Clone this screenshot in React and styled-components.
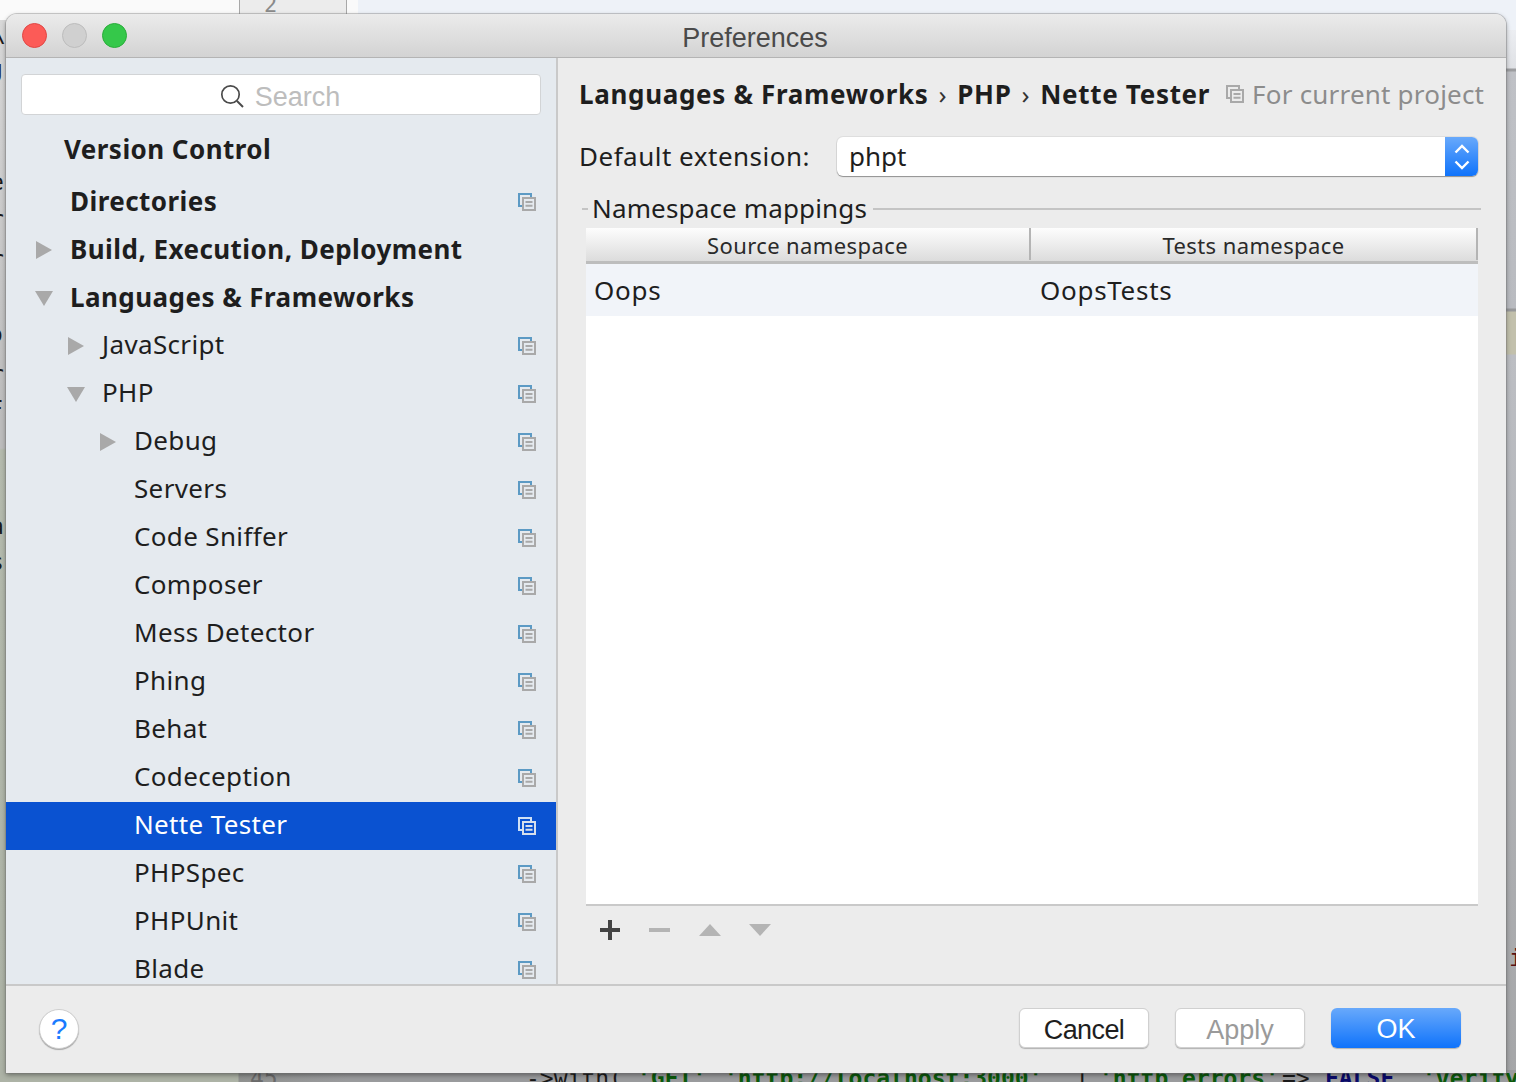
import React from 'react';
import styled, { createGlobalStyle } from 'styled-components';

const GlobalStyle = createGlobalStyle`
  html, body {
    margin: 0;
    padding: 0;
    width: 1516px;
    height: 1082px;
    overflow: hidden;
    background: #f7f8fa;
  }
  * { box-sizing: border-box; }
`;

const UI_FONT = `"Noto Sans", "Open Sans", sans-serif`;
const MAC_FONT = `"Liberation Sans", Arial, sans-serif`;
const CODE_FONT = `"DejaVu Sans Mono", "Liberation Mono", monospace`;

const Desktop = styled.div`
  position: relative;
  width: 1516px;
  height: 1082px;
  overflow: hidden;
`;

const TopStrip = styled.div`
  position: absolute;
  top: 0;
  left: 0;
  right: 0;
  height: 30px;
  background: linear-gradient(90deg, #fafafa 358px, #eef2f8 358px);
`;

const Gutter = styled.div`
  position: absolute;
  top: 0;
  left: 239px;
  width: 108px;
  height: 30px;
  padding-left: 24px;
  background: #ececec;
  border: 1px solid #a8a8a8;
  border-width: 0 1px;
  color: #8a8a8a;
  font: 22px/10px ${CODE_FONT};
`;

const LeftStrip = styled.div`
  position: absolute;
  top: 20px;
  left: 0;
  width: 6px;
  height: 1062px;
  background: linear-gradient(180deg, #d8d8d8 0, #bdbdbd 400px, #bdbdbd 428px, #b5bbae 430px, #adb3a6 100%);
`;

const RightStrip = styled.div`
  position: absolute;
  top: 30px;
  right: 0;
  width: 10px;
  height: 1052px;
  background: linear-gradient(
    180deg,
    #eceef2 0,
    #dfe1e5 38px,
    #9c9da0 39px,
    #9c9da0 41px,
    #bfc1c6 42px,
    #b9bbc0 278px,
    #97989a 279px,
    #97989a 281px,
    #c2c0ac 282px,
    #c2c0ac 324px,
    #bcbec3 325px,
    #a5a6a8 100%
  );
`;

const BottomStrip = styled.div`
  position: absolute;
  left: 0;
  right: 0;
  bottom: 0;
  height: 12px;
  background: linear-gradient(90deg, #adb3a6 238px, #8f918f 239px, #9a9b9d 347px, #9a9b9d 100%);
`;

const Fragment = styled.span`
  position: absolute;
  left: ${(p) => p.$x}px;
  top: ${(p) => p.$y}px;
  color: ${(p) => p.$color || '#1a1a1a'};
  font: ${(p) => (p.$bold ? 700 : 400)} 23px/28px ${CODE_FONT};
  white-space: pre;
`;

const Window = styled.div`
  position: absolute;
  left: 6px;
  top: 14px;
  width: 1500px;
  height: 1059px;
  display: flex;
  flex-direction: column;
  background: #ececec;
  border-radius: 11px 11px 0 0;
  box-shadow: 0 0 0 1px rgba(120, 120, 120, 0.35), 0 2px 5px rgba(0, 0, 0, 0.4);
  overflow: hidden;
`;

const TitleBar = styled.div`
  position: relative;
  height: 44px;
  flex: none;
  display: flex;
  align-items: center;
  justify-content: center;
  padding: 5px 2px 0 0;
  background: linear-gradient(180deg, #ebebeb, #d3d3d3);
  border-bottom: 1px solid #b4b4b4;
  color: #4a4a4a;
  font: 27px ${MAC_FONT};
`;

const Lights = styled.div`
  position: absolute;
  left: 15.5px;
  top: 9px;
  display: flex;
  gap: 15px;
`;

const Light = styled.span`
  width: 25px;
  height: 25px;
  border-radius: 50%;
  background: ${(p) => p.$color};
  border: 1px solid ${(p) => p.$edge};
`;

const Body = styled.div`
  flex: 1;
  display: flex;
  min-height: 0;
`;

const Sidebar = styled.div`
  width: 552px;
  flex: none;
  background: #e5eaef;
  border-right: 2px solid #c9c9c9;
  overflow: hidden;
  padding-top: 16px;
`;

const SearchBox = styled.div`
  height: 41px;
  margin: 0 15px;
  width: 520px;
  padding: 2px 2px 0 0;
  background: #fff;
  border: 1px solid #d2d4d6;
  border-radius: 4px;
  display: flex;
  align-items: center;
  justify-content: center;
  gap: 11px;
  color: #bdbdbd;
  font: 27px ${MAC_FONT};
`;

const SearchLabel = styled.span`
  margin-top: 4px;
`;

const TreeList = styled.div`
  margin-top: 11px;
`;

const TreeRow = styled.div`
  position: relative;
  height: 48px;
  margin-bottom: ${(p) => (p.$gap ? 4 : 0)}px;
  padding-left: ${(p) => p.$indent}px;
  padding-right: 20px;
  display: flex;
  align-items: center;
  justify-content: space-between;
  background: ${(p) => (p.$active ? '#0a52d1' : 'transparent')};
  color: ${(p) => (p.$active ? '#fff' : '#1e1e1e')};
  font: ${(p) => (p.$bold ? 700 : 400)} 26px/46px ${UI_FONT};
  letter-spacing: ${(p) => (p.$bold ? 0.45 : 0.35)}px;
`;

const RowLabel = styled.span`
  margin-bottom: ${(p) => (p.$bold ? 2 : 4)}px;
`;

const Arrow = styled.svg`
  position: absolute;
  left: ${(p) => p.$indent - 36}px;
  top: 14px;
`;

const PageIcon = ({ light, grey }) => {
  const back = light ? '#cfe0f5' : grey ? '#a9a9a9' : '#5c9ac4';
  const front = light ? '#d6dfec' : '#a9a9a9';
  const fill = light ? '#0a52d1' : grey ? '#ececec' : '#e5eaef';
  return (
    <svg width="18" height="18" viewBox="0 0 18 18" style={{ flex: 'none' }}>
      <rect x="1" y="1" width="12" height="12" fill="none" stroke={back} strokeWidth="2" />
      <rect x="5" y="5" width="12" height="12" fill={fill} stroke={front} strokeWidth="2" />
      <path d="M7.5 9h7M7.5 12.8h7" stroke={front} strokeWidth="2" />
    </svg>
  );
};

const Content = styled.div`
  flex: 1;
  min-width: 0;
  padding: 0 28px 0 21px;
  display: flex;
  flex-direction: column;
`;

const Crumbs = styled.div`
  height: 72px;
  flex: none;
  display: flex;
  align-items: center;
  white-space: nowrap;
  font: 700 26px ${UI_FONT};
  letter-spacing: 0.68px;
  color: #1e1e1e;
`;

const Sep = styled.span`
  font-weight: 400;
  margin: 0 10px;
  color: #333;
`;

const ProjectHint = styled.span`
  display: flex;
  align-items: center;
  gap: 8px;
  margin-left: 16px;
  font-weight: 400;
  letter-spacing: 0.2px;
  color: #8c8c8c;
`;

const ExtensionRow = styled.div`
  height: 39px;
  margin-top: 7px;
  flex: none;
  display: flex;
  align-items: center;
  font: 26px ${UI_FONT};
  letter-spacing: 0.3px;
  color: #1e1e1e;
`;

const ExtensionLabel = styled.span`
  width: 258px;
  flex: none;
  white-space: nowrap;
  margin-bottom: 1px;
  letter-spacing: 0.5px;
`;

const Combo = styled.div`
  width: 643px;
  height: 39px;
  display: flex;
  align-items: stretch;
  background: #fff;
  border-radius: 6px;
  box-shadow: 0 0 0 1px rgba(0, 0, 0, 0.06), 0 1px 1px rgba(0, 0, 0, 0.35);
  overflow: hidden;
`;

const ComboValue = styled.div`
  flex: 1;
  padding-left: 12px;
  line-height: 38px;
  letter-spacing: 0;
`;

const ComboStepper = styled.div`
  width: 33px;
  display: flex;
  align-items: center;
  justify-content: center;
  background: linear-gradient(180deg, #68a9fb, #0f73fb);
`;

const GroupTitle = styled.div`
  margin-top: 14px;
  height: 38px;
  flex: none;
  margin-left: 3px;
  margin-right: -3px;
  display: flex;
  align-items: center;
  font: 26px ${UI_FONT};
  letter-spacing: 0.15px;
  color: #1e1e1e;

  &::before {
    content: '';
    width: 6px;
    height: 2px;
    margin-right: 4px;
    background: #c4c4c4;
  }

  &::after {
    content: '';
    flex: 1;
    height: 2px;
    margin-left: 6px;
    background: #c4c4c4;
  }
`;

const GroupLabel = styled.span`
  margin-bottom: 2px;
`;

const Table = styled.div`
  width: 892px;
  margin-left: 7px;
  height: 678px;
  flex: none;
  display: flex;
  flex-direction: column;
  background: #fff;
  border-bottom: 2px solid #c9c9c9;
`;

const TableHead = styled.div`
  height: 36px;
  flex: none;
  display: grid;
  grid-template-columns: 445px 1fr;
  background: linear-gradient(180deg, #fdfdfd, #dcdcdc);
  border-bottom: 3px solid #bdbdbd;
`;

const HeadCell = styled.div`
  height: 32px;
  text-align: center;
  font: 22px/34px ${UI_FONT};
  letter-spacing: 0.4px;
  color: #2a2a2a;
  border-right: 2px solid #b4b4b4;
`;

const TableRow = styled.div`
  height: 52px;
  display: grid;
  grid-template-columns: 446px 1fr;
  background: #f1f4f9;
`;

const Cell = styled.div`
  padding-left: 8px;
  font: 26px/52px ${UI_FONT};
  letter-spacing: 0.7px;
  color: #1e1e1e;
`;

const TableTools = styled.div`
  margin-left: 7px;
  margin-top: 12px;
  display: flex;
  align-items: center;
  gap: 26px;
  padding-left: 12px;
`;

const Footer = styled.div`
  height: 89px;
  flex: none;
  border-top: 2px solid #c9c9c9;
  display: flex;
  align-items: center;
  justify-content: space-between;
  padding: 0 45px 2px 33px;
`;

const HelpButton = styled.div`
  width: 40px;
  height: 40px;
  border-radius: 50%;
  background: #fff;
  border: 1px solid #cfcfcf;
  box-shadow: 0 1px 1px rgba(0, 0, 0, 0.3);
  color: #1a7bff;
  font: 400 30px/38px ${MAC_FONT};
  text-align: center;
`;

const Buttons = styled.div`
  display: flex;
  gap: 26px;
  margin-bottom: 2px;
`;

const Button = styled.button`
  width: 130px;
  height: 40px;
  padding: 2px 0 0;
  border-radius: 6px;
  font: 27px/38px ${MAC_FONT};
  letter-spacing: ${(p) => p.$tracking || 0}px;
  border: ${(p) => (p.$primary ? 'none' : '1px solid #d0d0d0')};
  background: ${(p) => (p.$primary ? 'linear-gradient(180deg, #68a9fb, #0f73fb)' : '#fff')};
  color: ${(p) => (p.$primary ? '#fff' : p.$muted ? '#9a9a9a' : '#1e1e1e')};
  box-shadow: 0 1px 1px rgba(0, 0, 0, 0.25);
`;

const tree = [
  { label: 'Version Control', bold: true, indent: 58, gap: true },
  { label: 'Directories', bold: true, indent: 64, icon: true },
  { label: 'Build, Execution, Deployment', bold: true, indent: 64, arrow: 'right' },
  { label: 'Languages & Frameworks', bold: true, indent: 64, arrow: 'down' },
  { label: 'JavaScript', indent: 96, arrow: 'right', icon: true },
  { label: 'PHP', indent: 96, arrow: 'down', icon: true },
  { label: 'Debug', indent: 128, arrow: 'right', icon: true },
  { label: 'Servers', indent: 128, icon: true },
  { label: 'Code Sniffer', indent: 128, icon: true },
  { label: 'Composer', indent: 128, icon: true },
  { label: 'Mess Detector', indent: 128, icon: true },
  { label: 'Phing', indent: 128, icon: true },
  { label: 'Behat', indent: 128, icon: true },
  { label: 'Codeception', indent: 128, icon: true },
  { label: 'Nette Tester', indent: 128, icon: true, active: true },
  { label: 'PHPSpec', indent: 128, icon: true },
  { label: 'PHPUnit', indent: 128, icon: true },
  { label: 'Blade', indent: 128, icon: true },
];

const RowArrow = ({ dir, indent }) => (
  <Arrow $indent={indent} width="20" height="20" viewBox="0 0 20 20">
    <path d={dir === 'right' ? 'M2 1l16 9-16 9z' : 'M1 3h18l-9 15z'} fill="#a9a9a9" />
  </Arrow>
);

export default function App() {
  return (
    <Desktop>
      <GlobalStyle />
      <TopStrip>
        <Gutter>2</Gutter>
      </TopStrip>
      <LeftStrip />
      <RightStrip />
      <BottomStrip />
      <Fragment $x={-8} $y={20}>\</Fragment>
      <Fragment $x={-11} $y={55}>g</Fragment>
      <Fragment $x={-10} $y={168}>e</Fragment>
      <Fragment $x={-10} $y={205}>r</Fragment>
      <Fragment $x={-10} $y={245}>r</Fragment>
      <Fragment $x={-11} $y={320}>o</Fragment>
      <Fragment $x={-10} $y={360}>r</Fragment>
      <Fragment $x={-11} $y={395}>F</Fragment>
      <Fragment $x={-10} $y={512}>a</Fragment>
      <Fragment $x={-10} $y={548}>s</Fragment>
      <Fragment $x={1509} $y={944} $color="#5a1010">i</Fragment>
      <Fragment $x={250} $y={1064} $color="#6a6a6a">45</Fragment>
      <Fragment $x={526} $y={1064}>{'->with('}</Fragment>
      <Fragment $x={637} $y={1064} $color="#0b5a0b" $bold>{"'GET'"}</Fragment>
      <Fragment $x={724} $y={1064} $color="#0b5a0b" $bold>{"'http://localhost:3000'"}</Fragment>
      <Fragment $x={1076} $y={1064}>[</Fragment>
      <Fragment $x={1099} $y={1064} $color="#0b5a0b" $bold>{"'http_errors'"}</Fragment>
      <Fragment $x={1282} $y={1064}>{'=>'}</Fragment>
      <Fragment $x={1325} $y={1064} $color="#0a0a6a" $bold>FALSE</Fragment>
      <Fragment $x={1422} $y={1064} $color="#0b5a0b" $bold>{"'verify"}</Fragment>

      <Window>
        <TitleBar>
          <Lights>
            <Light $color="#fc5b57" $edge="#df4744" />
            <Light $color="#d0d0d0" $edge="#bcbcbc" />
            <Light $color="#35c84a" $edge="#2aac3a" />
          </Lights>
          Preferences
        </TitleBar>
        <Body>
          <Sidebar>
            <SearchBox>
              <svg width="24" height="24" viewBox="0 0 24 24">
                <circle cx="10.5" cy="10.5" r="8.7" fill="none" stroke="#4a4a4a" strokeWidth="1.7" />
                <path d="M17 17l6 6" stroke="#4a4a4a" strokeWidth="1.9" />
              </svg>
              <SearchLabel>Search</SearchLabel>
            </SearchBox>
            <TreeList>
              {tree.map((row) => (
                <TreeRow
                  key={row.label}
                  $indent={row.indent}
                  $bold={row.bold}
                  $active={row.active}
                  $gap={row.gap}
                >
                  {row.arrow && <RowArrow dir={row.arrow} indent={row.indent} />}
                  <RowLabel $bold={row.bold}>{row.label}</RowLabel>
                  {row.icon && <PageIcon light={row.active} />}
                </TreeRow>
              ))}
            </TreeList>
          </Sidebar>
          <Content>
            <Crumbs>
              Languages &amp; Frameworks<Sep>›</Sep>PHP<Sep>›</Sep>Nette Tester
              <ProjectHint>
                <PageIcon grey />
                For current project
              </ProjectHint>
            </Crumbs>
            <ExtensionRow>
              <ExtensionLabel>Default extension:</ExtensionLabel>
              <Combo>
                <ComboValue>phpt</ComboValue>
                <ComboStepper>
                  <svg width="18" height="30" viewBox="0 0 18 30">
                    <path d="M2.5 10.5L9 4l6.5 6.5M2.5 19.5L9 26l6.5-6.5" fill="none" stroke="#fff" strokeWidth="2.4" />
                  </svg>
                </ComboStepper>
              </Combo>
            </ExtensionRow>
            <GroupTitle>
              <GroupLabel>Namespace mappings</GroupLabel>
            </GroupTitle>
            <Table>
              <TableHead>
                <HeadCell>Source namespace</HeadCell>
                <HeadCell>Tests namespace</HeadCell>
              </TableHead>
              <TableRow>
                <Cell>Oops</Cell>
                <Cell>OopsTests</Cell>
              </TableRow>
            </Table>
            <TableTools>
              <svg width="24" height="24" viewBox="0 0 24 24">
                <path d="M10 2h4v8h8v4h-8v8h-4v-8H2v-4h8z" fill="#444" />
              </svg>
              <svg width="24" height="24" viewBox="0 0 24 24">
                <rect x="1" y="10" width="21" height="4" fill="#b4b4b4" />
              </svg>
              <svg width="24" height="24" viewBox="0 0 24 24">
                <path d="M1 18L12 6l11 12z" fill="#b4b4b4" />
              </svg>
              <svg width="24" height="24" viewBox="0 0 24 24">
                <path d="M1 6h22L12 18z" fill="#b4b4b4" />
              </svg>
            </TableTools>
          </Content>
        </Body>
        <Footer>
          <HelpButton>?</HelpButton>
          <Buttons>
            <Button $tracking={-0.6}>Cancel</Button>
            <Button $muted>Apply</Button>
            <Button $primary>OK</Button>
          </Buttons>
        </Footer>
      </Window>
    </Desktop>
  );
}
